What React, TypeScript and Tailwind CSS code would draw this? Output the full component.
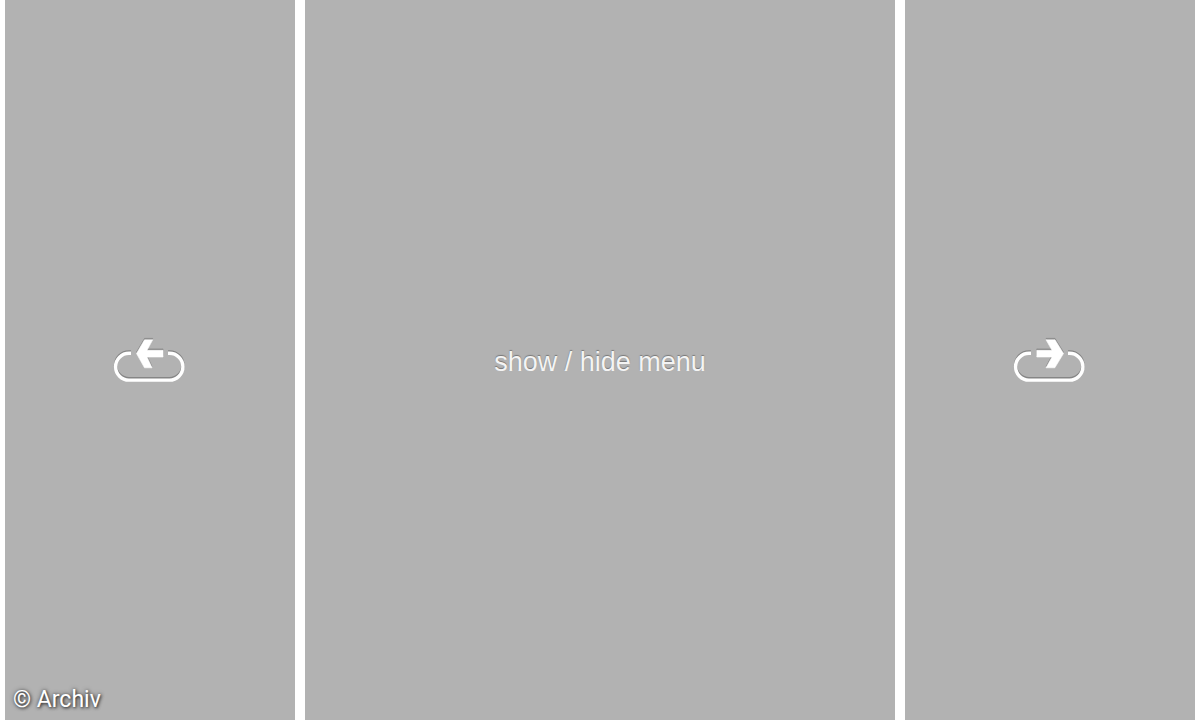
interface CloudArrowProps {
  direction: "left" | "right";
}

function CloudArrow({ direction }: CloudArrowProps) {
  const arrow =
    direction === "left"
      ? "M36.5 28.5 44.5 14.8H52.7L47 25.3H63V32H47L52 42.8H44.5Z"
      : "M63.5 28.5 55 14.8H46L52 25.3H36.8V32H52L46 42.8H54.8Z";

  return (
    <svg viewBox="0 0 100 70" className="h-[70px] w-[100px]" aria-hidden="true">
      {["#858585", "#ffffff"].map((color, index) => (
        <g key={color} transform={index === 0 ? "translate(0 -1.4)" : undefined}>
          <path
            d="M31 28.3H29A13.4 13.4 0 0 0 29 55.1H69.5A13.4 13.4 0 0 0 69.5 28.3H68"
            fill="none"
            stroke={color}
            strokeWidth="3.4"
          />
          <path d={arrow} fill={color} stroke={color} strokeWidth="0.6" strokeLinejoin="round" />
        </g>
      ))}
    </svg>
  );
}

export default function App() {
  return (
    <main className="grid min-h-screen grid-cols-[1fr_2fr_1fr] bg-white">
      <section className="mx-[5px] grid grid-rows-[1fr_auto_1fr] bg-[#b2b2b2]">
        <button
          type="button"
          aria-label="Previous page"
          className="row-start-2 flex cursor-pointer items-center justify-center"
        >
          <CloudArrow direction="left" />
        </button>
        <p className="row-start-3 self-end px-2 pb-1.5 font-[Roboto,sans-serif] text-[23px] leading-7 text-white [text-shadow:1px_1px_3px_#333333,0_0_4px_#555555]">
          © Archiv
        </p>
      </section>

      <button
        type="button"
        className="mx-[5px] flex cursor-pointer items-center justify-center bg-[#b2b2b2] pt-1 font-['Liberation_Sans',Arial,sans-serif] text-[27px] leading-8 text-[#f4f4f4] [text-shadow:0_-1px_1px_#777777]"
      >
        show / hide menu
      </button>

      <button
        type="button"
        aria-label="Next page"
        className="mx-[5px] flex cursor-pointer items-center justify-center bg-[#b2b2b2]"
      >
        <CloudArrow direction="right" />
      </button>
    </main>
  );
}
